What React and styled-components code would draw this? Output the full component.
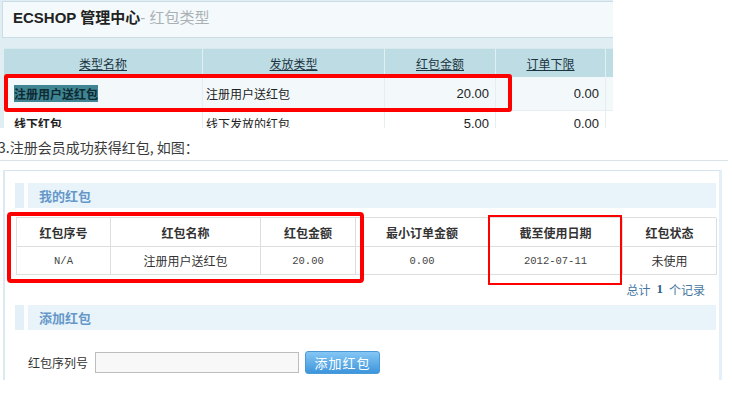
import React from "react";
import styled, { createGlobalStyle } from "styled-components";

const GlobalStyle = createGlobalStyle`
  html, body {
    overflow: hidden;
  }
  body {
    margin: 0;
    background: #fff;
    font-family: "Noto Sans CJK SC", sans-serif;
  }
`;

const Page = styled.div`
  width: 732px;
  display: flex;
  flex-direction: column;
`;

/* ---------- top screenshot: ECSHOP admin ---------- */

const AdminShot = styled.div`
  flex: none;
  width: 613px;
  height: 128px;
  overflow: hidden;
  background: #e0edf2;
`;

const AdminHeader = styled.div`
  height: 37px;
  margin: 1px 0 0 2px;
  border: 1px solid #cadce4;
  border-right: none;
  background: #f4f9fb;
  display: flex;
  align-items: center;
  padding: 0 0 6px 10px;
  box-sizing: border-box;
  font: bold 15px "Liberation Sans", "Noto Sans CJK SC", sans-serif;
  color: #222;
`;

const HeaderSub = styled.span`
  font-weight: normal;
  color: #a9b1b5;
`;

const AdminTable = styled.div`
  position: relative;
  margin: 10px 0 0 4px;
  display: grid;
  grid-template-columns: 199px 182px 111px 110px 1fr;
  font: 12px "Liberation Sans", "Noto Sans CJK SC", sans-serif;
  color: #222;
`;

const AdminTh = styled.div`
  height: 29px;
  display: flex;
  align-items: center;
  justify-content: center;
  background: #bddce4;
  border-top: 1px solid #d6e9ee;
  border-right: 1px solid #e2eff3;
  box-sizing: border-box;
  color: #1c3440;
  text-decoration: underline;
`;

const AdminTd = styled.div`
  height: ${(p) => (p.$first ? 34 : 26)}px;
  display: flex;
  align-items: center;
  justify-content: ${(p) => (p.$align === "right" ? "flex-end" : "flex-start")};
  padding: 0 6px 0 ${(p) => (p.$pad ?? 3)}px;
  box-sizing: border-box;
  background: ${(p) => (p.$first ? "#f3f9fb" : "#fff")};
  border-right: 1px solid #e6eef1;
  border-bottom: 1px solid #e6eef1;
  font-weight: ${(p) => (p.$bold ? "bold" : "normal")};
  font-size: ${(p) => (p.$num ? 13 : 12)}px;
`;

const Selected = styled.span`
  background: #3f8593;
  color: #0e2a32;
`;

const RedFrame = styled.div`
  position: absolute;
  box-sizing: border-box;
  border: ${(p) => p.$w}px solid #ff0000;
  border-radius: ${(p) => p.$r}px;
  pointer-events: none;
`;

/* ---------- caption ---------- */

const Caption = styled.div`
  flex: none;
  height: 30px;
  padding-top: 10px;
  box-sizing: border-box;
  margin-left: -2px;
  line-height: 18px;
  font-size: 14px;
  color: #3a3a3a;
`;

/* ---------- second screenshot: member centre ---------- */

const MemberShot = styled.div`
  flex: none;
  width: 728px;
  height: 227px;
  padding-top: 2px;
  box-sizing: border-box;
  overflow: hidden;
`;

const TopRule = styled.div`
  border-top: 1px solid #d9e2e7;
  padding-top: 9px;
`;

const Panel = styled.div`
  margin: 0 6px 0 3px;
  height: 210px;
  border: 1px solid #d6e6f0;
  border-left: 2px solid #dbe9f3;
  border-right: 3px solid #e4f0f8;
  border-bottom: none;
  padding: 12px 3px 0 10px;
  box-sizing: border-box;
`;

const SectionBar = styled.div`
  height: 25px;
  display: flex;
  align-items: center;
  padding-left: 24px;
  background: linear-gradient(
    to right,
    #e4f0f8 9px,
    #fbfdff 9px,
    #fbfdff 13px,
    #e9f3fa 13px
  );
  font-size: 13px;
  font-weight: bold;
  color: #6598c9;
`;

const BonusTable = styled.div`
  position: relative;
  margin: 9px 0 0 1px;
  width: 700px;
  display: grid;
  grid-template-columns: 94px 150px 95px 133px 134px 94px;
  border-top: 1px solid #dedede;
  border-left: 1px solid #dedede;
  box-sizing: border-box;
`;

const BonusCell = styled.div`
  height: ${(p) => (p.$head ? 29 : 28)}px;
  display: flex;
  align-items: center;
  justify-content: center;
  border-right: 1px solid #dedede;
  border-bottom: 1px solid #dedede;
  box-sizing: border-box;
  font-size: 12px;
  font-weight: ${(p) => (p.$head ? "bold" : "normal")};
  color: ${(p) => (p.$mono ? "#444" : "#333")};
  font-family: ${(p) =>
    p.$mono
      ? '"Liberation Mono", "Noto Sans CJK SC", monospace'
      : '"Noto Sans CJK SC", sans-serif'};
  ${(p) => p.$mono && "font-size: 10.5px;"}
`;

const Total = styled.div`
  height: 30px;
  display: flex;
  align-items: center;
  justify-content: flex-end;
  gap: 6px;
  padding: 0 11px 2px 0;
  box-sizing: border-box;
  font-size: 12px;
  color: #47779f;
`;

const TotalNum = styled.b`
  font-family: "Liberation Serif", serif;
  font-size: 13px;
  color: #2c5f8a;
`;

const FormRow = styled.div`
  margin-top: 21px;
  display: flex;
  align-items: center;
  padding-left: 13px;
  font-size: 12px;
  color: #333;
`;

const Input = styled.div`
  width: 204px;
  height: 21px;
  margin-left: 7px;
  border: 1px solid #bdbdbd;
  background: #f8f8f8;
  box-sizing: border-box;
`;

const AddButton = styled.button`
  margin-left: 6px;
  width: 75px;
  height: 23px;
  border: 1px solid #4b9ad6;
  border-radius: 3px;
  background: linear-gradient(#84c7f4, #3d95dc);
  color: #fff;
  font: 13px "Noto Sans CJK SC", sans-serif;
  letter-spacing: 1px;
  padding: 0;
`;

const RedNote = styled.div`
  flex: none;
  padding: 10px 0 0 8px;
  font-size: 17px;
  font-weight: bold;
  line-height: 18px;
  color: #ff0000;
  white-space: nowrap;
`;

const adminRows = [
  { name: "注册用户送红包", type: "注册用户送红包", amount: "20.00", min: "0.00", first: true },
  { name: "线下红包", type: "线下发放的红包", amount: "5.00", min: "0.00" },
];

const bonusHead = ["红包序号", "红包名称", "红包金额", "最小订单金额", "截至使用日期", "红包状态"];

export default function App() {
  return (
    <>
      <GlobalStyle />
      <Page>
        <AdminShot>
          <AdminHeader>
            ECSHOP 管理中心<HeaderSub>- 红包类型</HeaderSub>
          </AdminHeader>
          <AdminTable>
            {["类型名称", "发放类型", "红包金额", "订单下限", ""].map((h, i) => (
              <AdminTh key={i}>{h}</AdminTh>
            ))}
            {adminRows.map((r) => (
              <React.Fragment key={r.name}>
                <AdminTd $first={r.first} $bold $pad={10}>
                  {r.first ? <Selected>{r.name}</Selected> : r.name}
                </AdminTd>
                <AdminTd $first={r.first}>{r.type}</AdminTd>
                <AdminTd $first={r.first} $align="right" $num>{r.amount}</AdminTd>
                <AdminTd $first={r.first} $align="right" $num>{r.min}</AdminTd>
                <AdminTd $first={r.first} />
              </React.Fragment>
            ))}
            <RedFrame $w={4} $r={3} style={{ left: 0, top: 26, width: 508, height: 38 }} />
          </AdminTable>
        </AdminShot>

        <Caption>3.注册会员成功获得红包, 如图：</Caption>

        <MemberShot>
          <TopRule>
            <Panel>
              <SectionBar>我的红包</SectionBar>
              <BonusTable>
                {bonusHead.map((h) => (
                  <BonusCell key={h} $head>{h}</BonusCell>
                ))}
                <BonusCell $mono>N/A</BonusCell>
                <BonusCell>注册用户送红包</BonusCell>
                <BonusCell $mono>20.00</BonusCell>
                <BonusCell $mono>0.00</BonusCell>
                <BonusCell $mono>2012-07-11</BonusCell>
                <BonusCell>未使用</BonusCell>
                <RedFrame $w={4} $r={4} style={{ left: -10, top: -6, width: 357, height: 71 }} />
                <RedFrame $w={2} $r={0} style={{ left: 471, top: -3, width: 134, height: 70 }} />
              </BonusTable>
              <Total>
                总计 <TotalNum>1</TotalNum> 个记录
              </Total>
              <SectionBar>添加红包</SectionBar>
              <FormRow>
                红包序列号
                <Input />
                <AddButton>添加红包</AddButton>
              </FormRow>
            </Panel>
          </TopRule>
        </MemberShot>

        <RedNote>4.在购物车结算时即可使用该红包抵扣订单金额</RedNote>
      </Page>
    </>
  );
}
